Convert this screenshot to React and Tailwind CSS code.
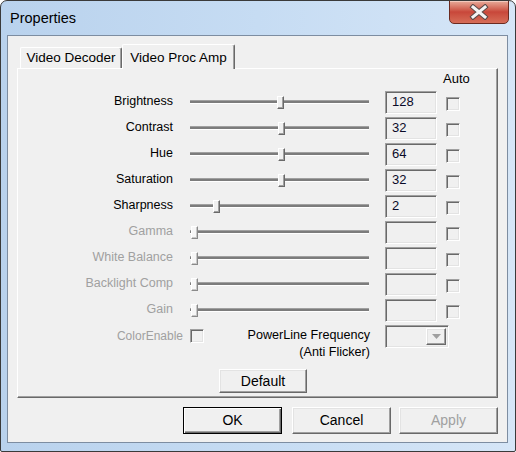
import React from 'react';

const rows = [
    { label: 'Brightness', value: '128', pos: 87, enabled: true },
    { label: 'Contrast', value: '32', pos: 88, enabled: true },
    { label: 'Hue', value: '64', pos: 88, enabled: true },
    { label: 'Saturation', value: '32', pos: 88, enabled: true },
    { label: 'Sharpness', value: '2', pos: 23, enabled: true },
    { label: 'Gamma', value: '', pos: 1, enabled: false },
    { label: 'White Balance', value: '', pos: 1, enabled: false },
    { label: 'Backlight Comp', value: '', pos: 1, enabled: false },
    { label: 'Gain', value: '', pos: 1, enabled: false },
];

const sunken = 'border border-t-[#a0a0a0] border-l-[#a0a0a0] border-r-white border-b-white shadow-[inset_1px_1px_0_#696969,inset_-1px_-1px_0_#e3e3e3]';
const raised = 'border border-t-white border-l-white border-r-[#696969] border-b-[#696969] shadow-[inset_-1px_-1px_0_#a0a0a0,inset_1px_1px_0_#e3e3e3]';

const Checkbox = ({ className = '' }) => (
    <div className={`h-[14px] w-[14px] bg-[#f0f0f0] ${sunken} ${className}`} />
);

const Slider = ({ pos, enabled }) => (
    <div className="relative ml-[17px] h-[13px] w-[179px]">
        <div className="absolute left-0 right-0 top-[4px] h-[4px] border-t border-b border-t-[#a0a0a0] border-b-white bg-[#7c7c7c]" />
        {/* thumb */}
        <div
            style={{ left: pos }}
            className={`absolute top-0 h-[13px] w-[7px] border border-t-white border-l-white ${
                enabled
                    ? 'bg-[#f0f0f0] border-r-[#696969] border-b-[#696969] shadow-[inset_-1px_-1px_0_#a0a0a0]'
                    : 'bg-[#f7f7f7] border-r-[#8a8a8a] border-b-[#8a8a8a] shadow-[inset_-1px_-1px_0_#c8c8c8]'
            }`}
        />
    </div>
);

const Button = ({ children, className = '', disabled }) => (
    <div className={`flex items-center justify-center bg-[#f0f0f0] text-[14px] ${disabled ? 'text-[#a0a0a0]' : 'text-black'} ${className}`}>
        {children}
    </div>
);

const App = () => {
    return (
        <div className="w-[516px] h-[452px] flex flex-col border border-[#3a3a3a] rounded-t-[7px] rounded-b-[2px] bg-gradient-to-r from-[#b9d2ed] via-[#c6dcf3] to-[#d6e6f7] font-['Liberation_Sans',Arial,sans-serif] overflow-hidden">
            {/* title bar */}
            <div className="h-[34px] flex justify-between items-start shrink-0">
                <div className="pl-[9px] pt-[8px] text-[14.5px] leading-[18px] text-black">Properties</div>
                <div className="mr-[6px] -mt-px w-[60px] h-[24px] flex items-center justify-center rounded-b-[5px] border border-[#6b2a20] bg-gradient-to-b from-[#e7aa9a] via-[#c8473a] to-[#d66d58] shadow-[inset_0_1px_0_#f3c9bd]">
                    <svg width="22" height="16" viewBox="0 0 22 16">
                        <path d="M5 3 L17 13 M17 3 L5 13" stroke="#5a4a48" strokeWidth="5" strokeLinecap="square" fill="none" />
                        <path d="M5 3 L17 13 M17 3 L5 13" stroke="#f4f4f4" strokeWidth="3" strokeLinecap="square" fill="none" />
                    </svg>
                </div>
            </div>

            {/* client area */}
            <div className="ml-[6px] mr-[7px] mb-[8px] flex-1 border border-[#7d8da1] bg-[#f0f0f0] pl-[9px] pt-[8px]">
                {/* tabs */}
                <div className="flex items-end h-[24px]">
                    <div className="ml-[3px] w-[102px] h-[21px] border border-b-0 border-t-white border-l-white border-r-[#696969] rounded-t-[2px] shadow-[inset_-1px_0_0_#a0a0a0] flex items-center justify-center text-[13.5px] text-black">
                        Video Decoder
                    </div>
                    <div className="relative z-10 -mb-px w-[113px] h-[25px] bg-[#f0f0f0] border border-b-0 border-t-white border-l-white border-r-[#696969] rounded-t-[2px] shadow-[inset_-1px_0_0_#a0a0a0] flex items-start justify-center pt-[3px] text-[13.5px] text-black">
                        Video Proc Amp
                    </div>
                </div>

                {/* tab panel */}
                <div className="w-[481px] h-[330px] border border-t-white border-l-white border-r-[#696969] border-b-[#696969] shadow-[inset_-1px_-1px_0_#a0a0a0]">
                    <div className="h-[20px] flex items-center">
                        <span className="ml-[425px] text-[13px] text-black">Auto</span>
                    </div>

                    {rows.map((r) => (
                        <div key={r.label} className="h-[26px] flex items-center">
                            <div className={`w-[155px] -mt-[2px] text-right text-[12.5px] leading-[16px] ${r.enabled ? 'text-black' : 'text-[#a0a0a0]'}`}>
                                {r.label}
                            </div>
                            <Slider pos={r.pos} enabled={r.enabled} />
                            <div className={`ml-[16px] w-[52px] h-[23px] bg-[#f0f0f0] ${sunken} flex items-center pl-[6px] text-[13px] text-[#0a0a28]`}>
                                {r.value}
                            </div>
                            <Checkbox className="ml-[9px] mt-[4px]" />
                        </div>
                    ))}

                    {/* color enable / powerline */}
                    <div className="mt-[2px] flex items-start">
                        <div className="w-[165px] mt-[3px] text-right text-[12px] leading-[16px] text-[#a0a0a0]">ColorEnable</div>
                        <Checkbox className="ml-[7px] mt-[4px]" />
                        <div className="w-[166px] mt-[2px] text-right text-[12.6px] leading-[17px] text-black">
                            <div>PowerLine Frequency</div>
                            <div>(Anti Flicker)</div>
                        </div>
                        <div className={`ml-[15px] w-[64px] h-[23px] bg-[#f0f0f0] ${sunken} flex justify-end p-[2px]`}>
                            <div className={`w-[20px] h-full bg-[#f0f0f0] ${raised} flex items-center justify-center`}>
                                <svg width="9" height="5" viewBox="0 0 9 5">
                                    <path d="M0 0 H9 L4.5 5 Z" fill="#a0a0a0" />
                                </svg>
                            </div>
                        </div>
                    </div>

                    <div className="mt-[8px] flex">
                        <Button className={`ml-[201px] w-[88px] h-[24px] ${raised} text-[13px]`}>Default</Button>
                    </div>
                </div>

                {/* dialog buttons */}
                <div className="mt-[9px] flex">
                    <Button className="ml-[166px] w-[99px] h-[27px] border border-black shadow-[inset_1px_1px_0_#ffffff,inset_-1px_-1px_0_#696969,inset_-2px_-2px_0_#a0a0a0]">OK</Button>
                    <Button className={`ml-[10px] w-[99px] h-[27px] ${raised}`}>Cancel</Button>
                    <Button className={`ml-[8px] w-[99px] h-[27px] ${raised}`} disabled>Apply</Button>
                </div>
            </div>
        </div>
    );
};

export default App;
